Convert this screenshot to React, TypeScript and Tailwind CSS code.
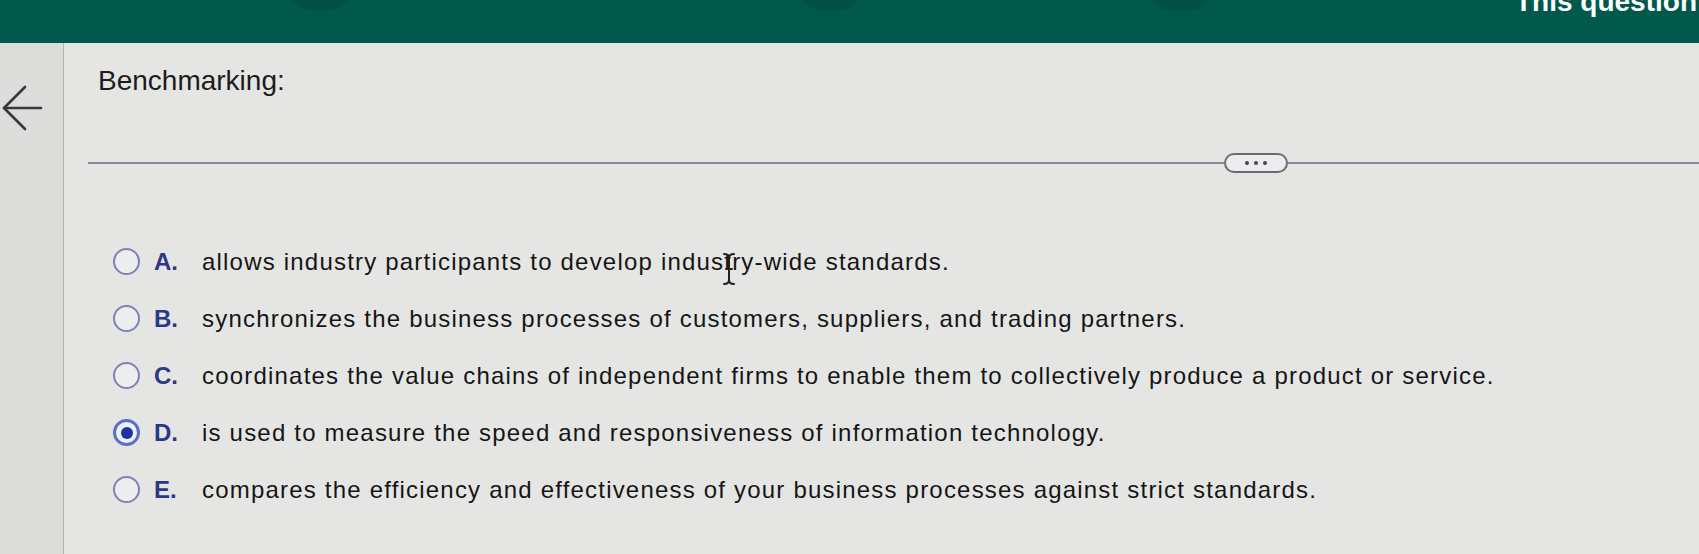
const options = [
  { letter: "A.", text: "allows industry participants to develop industry-wide standards." },
  { letter: "B.", text: "synchronizes the business processes of customers, suppliers, and trading partners." },
  { letter: "C.", text: "coordinates the value chains of independent firms to enable them to collectively produce a product or service." },
  { letter: "D.", text: "is used to measure the speed and responsiveness of information technology." },
  { letter: "E.", text: "compares the efficiency and effectiveness of your business processes against strict standards." },
];

const SELECTED = "D.";

function Radio({ checked }: { checked: boolean }) {
  if (checked) {
    return (
      <div className="w-[27px] h-[27px] rounded-full border-[3px] border-[#5a6fc8] bg-[#eef0f8] flex items-center justify-center shrink-0">
        <div className="w-[12px] h-[12px] rounded-full bg-[#1c33a0]" />
      </div>
    );
  }
  return <div className="w-[27px] h-[27px] rounded-full border-2 border-[#7d82b4] bg-[#eceded] shrink-0" />;
}

export default function App() {
  return (
    <div
      className="relative w-[1699px] h-[554px] overflow-hidden flex flex-col bg-[#e5e6e4]"
      style={{ fontFamily: '"Liberation Sans", Arial, sans-serif' }}
    >
      {/* top bar */}
      <div className="h-[43px] bg-[#00594b] relative overflow-hidden shrink-0">
        <div className="absolute left-[290px] top-[-30px] w-[60px] h-[40px] rounded-full bg-[#005144]" />
        <div className="absolute left-[800px] top-[-30px] w-[60px] h-[40px] rounded-full bg-[#005144]" />
        <div className="absolute left-[1150px] top-[-30px] w-[60px] h-[40px] rounded-full bg-[#005144]" />
        <span className="absolute left-[1515px] top-[-19px] text-[28px] font-bold text-white whitespace-nowrap">
          This question
        </span>
      </div>

      <div className="flex flex-1">
        {/* left rail */}
        <div className="w-[64px] shrink-0 bg-[#dcdddb] border-r border-[#b4b5b3] pt-[42px] pl-[2px]">
          <svg width="42" height="46" viewBox="0 0 42 46" fill="none" stroke="#383838" strokeWidth="2.6" strokeLinecap="round" strokeLinejoin="round">
            <path d="M23 2 L2 23 L23 44" />
            <path d="M2 23 H39" />
          </svg>
        </div>

        {/* main */}
        <div className="flex-1 flex flex-col">
          <h1 className="pt-[21px] pl-[34px] text-[28px] leading-[34px] text-[#1c1c1c]">Benchmarking:</h1>

          <div className="mt-[55px] pl-[24px] flex items-center">
            <div className="w-[1136px] h-[2px] bg-[#8a8a9a]" />
            <div className="w-[64px] h-[20px] rounded-full border-2 border-[#6a6a7c] bg-[#ececec] flex items-center justify-center gap-[5px] shrink-0">
              <span className="w-[4px] h-[4px] rounded-full bg-[#44445a]" />
              <span className="w-[4px] h-[4px] rounded-full bg-[#44445a]" />
              <span className="w-[4px] h-[4px] rounded-full bg-[#44445a]" />
            </div>
            <div className="flex-1 h-[2px] bg-[#8a8a9a]" />
          </div>

          <div className="mt-[60px] pl-[49px] flex flex-col">
            {options.map((o) => (
              <div key={o.letter} className="h-[57px] flex items-center">
                <Radio checked={o.letter === SELECTED} />
                <span className="ml-[14px] w-[48px] text-[24px] font-bold text-[#2b3886]">{o.letter}</span>
                <span className="text-[24px] tracking-[1.2px] text-[#151515]">{o.text}</span>
              </div>
            ))}
          </div>
        </div>
      </div>

      {/* mouse I-beam cursor over option A */}
      <svg className="absolute left-[721px] top-[252px]" width="16" height="34" viewBox="0 0 16 34" fill="none" stroke="#202020" strokeWidth="2" strokeLinecap="round">
        <path d="M3 2 C6 2 8 3 8 6 V28 C8 31 10 32 13 32" />
        <path d="M13 2 C10 2 8 3 8 6" />
        <path d="M3 32 C6 32 8 31 8 28" />
        <path d="M5 17 H11" />
      </svg>
    </div>
  );
}
